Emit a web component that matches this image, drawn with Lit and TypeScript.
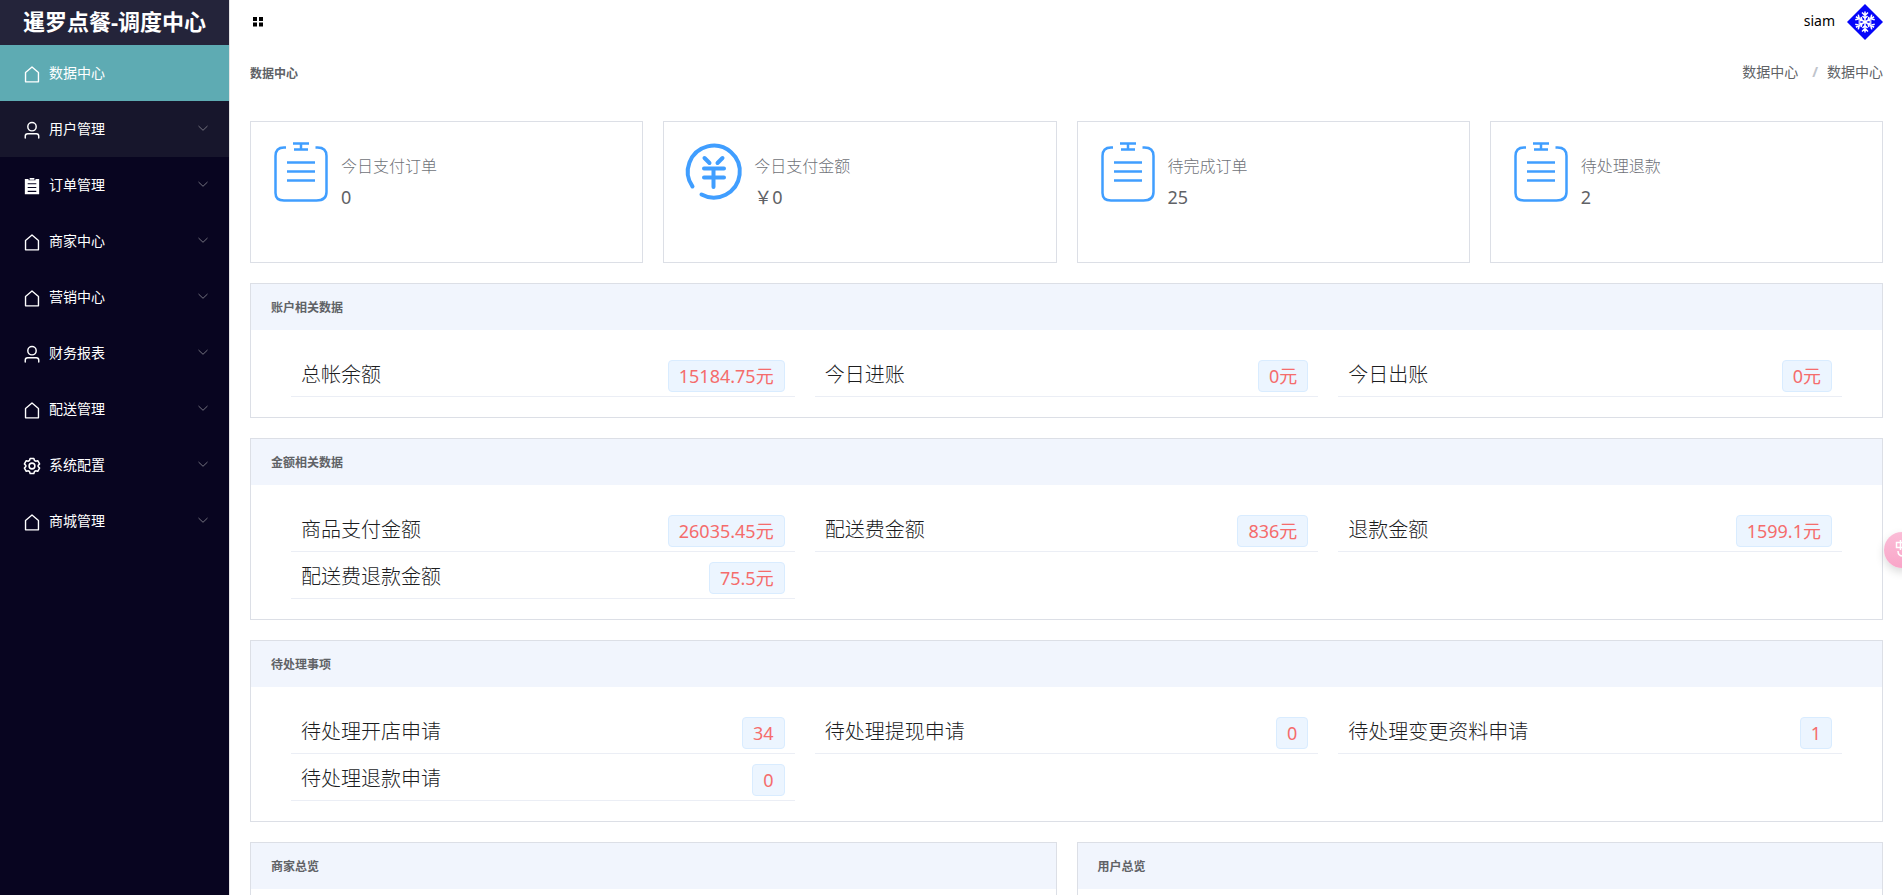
import { LitElement, html, svg, css } from "lit";
import { customElement, property } from "lit/decorators.js";

const FONT = css`"Noto Sans", "Noto Sans CJK SC", sans-serif`;

const icons: Record<string, unknown> = {
  house: svg`<path fill="none" stroke="currentColor" stroke-width="72" stroke-linejoin="round" d="M176 430V920h672V430L512 148z" />`,
  user: svg`<path fill="currentColor" d="M512 520a180 180 0 1 0 0-360 180 180 0 0 0 0 360m0 76a256 256 0 1 1 0-512 256 256 0 0 1 0 512m314 330v-92a90 90 0 0 0-90-90H288a90 90 0 0 0-90 90v92a37 37 0 1 1-74 0v-96a160 160 0 0 1 160-160h456a160 160 0 0 1 160 160v96a37 37 0 1 1-74 0" />`,
  order: svg`<path fill="currentColor" fill-rule="evenodd" d="M140 150h190v64h364v-64h190v786H140zm148 214v56h448v-56zm0 200v56h448v-56zm0 200v56h448v-56zM390 90h244v96H390z" />`,
  gear: svg`<path fill="none" stroke="currentColor" stroke-width="80" stroke-linejoin="round" d="M416 120h192l34 106 60 36 108-26 96 166-74 80v60l74 80-96 166-108-26-60 36-34 106H416l-34-106-60-36-108 26-96-166 74-80v-60l-74-80 96-166 108 26 60-36z" /><circle cx="512" cy="512" r="150" fill="none" stroke="currentColor" stroke-width="80" />`,
};

@customElement("side-item")
class SideItem extends LitElement {
  @property() label = "";
  @property() icon = "house";
  @property() state = "";
  @property({ type: Boolean }) leaf = false;

  static styles = css`
    :host { display: block; }
    .item {
      display: flex; align-items: center; width: 100%; height: 56px;
      padding: 0 20px 0 24px; border: 0; box-sizing: border-box;
      background: none; color: #fff; text-align: left; text-decoration: none;
      font: 14px/20px ${FONT}; cursor: pointer;
    }
    .active { background: #5eabb3; }
    .hover { background: #17162c; }
    .icon { width: 16px; height: 16px; margin: 2px 9px 0 0; }
    .label { flex: 1; }
    .arrow { width: 12px; height: 12px; color: #73727e; margin-top: -2px; }
  `;

  render() {
    const body = html`
      <svg class="icon" viewBox="96 96 832 832" overflow="visible" aria-hidden="true">${icons[this.icon]}</svg>
      <span class="label">${this.label}</span>`;
    return this.leaf
      ? html`<a class="item ${this.state}" href="#">${body}</a>`
      : html`<button class="item ${this.state}" type="button">${body}
          <svg class="arrow" viewBox="0 0 12 12" aria-hidden="true"><path d="M1.5 4L6 8.3 10.500 4" fill="none" stroke="currentColor" /></svg>
        </button>`;
  }
}

@customElement("stat-card")
class StatCard extends LitElement {
  @property() label = "";
  @property() value = "";
  @property() icon = "list";

  static styles = css`
    :host {
      display: flex; height: 142px; box-sizing: border-box; padding: 19px 20px;
      border: 1px solid #dcdfe6; background: #fff; font-family: ${FONT};
    }
    .icon { width: 60px; height: 60px; color: #409eff; flex: none; }
    .text { margin: 9px 0 0 10px; }
    .label { font-size: 16px; line-height: 32px; font-weight: 300; color: #6f7278; }
    .value { font-size: 18px; line-height: 30px; color: #606266; }
  `;

  render() {
    const art = this.icon === "list"
      ? svg`<path d="M15 6.500h-2Q4.500 6.500 4.500 15v37Q4.500 59.500 13 59.500h32.500Q55.500 59.500 55.500 51V15Q55.500 6.500 46.500 6.500h-2" stroke-width="2.500" /><path d="M22 2.500h16M30 2v6M23 8.500h14M16 21.500h28M16 30.500h28M16 39.500h28" stroke-width="2.500" />`
      : svg`<path d="M8.500 45.500a26 26 0 1 1 9 8" stroke-width="4" stroke-linecap="round" /><path d="M20.500 17l5 5M38.500 17l-5 5M20 27.500h20M20 36.500h20M29.500 28v18" stroke-width="4" stroke-linecap="round" />`;
    return html`
      <svg class="icon" viewBox="0 0 60 60" fill="none" stroke="currentColor" overflow="visible" aria-hidden="true">${art}</svg>
      <div class="text"><div class="label">${this.label}</div><div class="value">${this.value}</div></div>`;
  }
}

@customElement("data-panel")
class DataPanel extends LitElement {
  @property() heading = "";
  @property({ attribute: false }) rows: [string, string][] = [];

  static styles = css`
    :host { display: block; border: 1px solid #dcdfe6; background: #fff; font-family: ${FONT}; }
    .heading { margin: 0; height: 46px; box-sizing: border-box; padding: 2px 20px 0; font-size: 12px; line-height: 44px; font-weight: 700; color: #606266; background: #f1f5fd; }
    .grid { display: grid; grid-template-columns: repeat(3, 1fr); column-gap: 20px; margin: 0; padding: 20px 40px; min-height: 47px; }
    .row { display: flex; justify-content: space-between; align-items: flex-end; height: 47px; box-sizing: border-box; padding: 0 10px 4px; border-bottom: 1px solid #ebeef5; }
    .name { font-size: 20px; line-height: 34px; font-weight: 300; color: #1c1d1f; }
    .tag { margin: 0; padding: 0 10px; border: 1px solid #d9ecff; border-radius: 4px; background: #ecf5ff; color: #f56c6c; font-size: 18px; line-height: 30px; }
  `;

  render() {
    return html`
      <h2 class="heading">${this.heading}</h2>
      <dl class="grid">${this.rows.map(([name, value]) => html`
        <div class="row"><dt class="name">${name}</dt><dd class="tag">${value}</dd></div>`)}</dl>`;
  }
}

@customElement("app-root")
class AppRoot extends LitElement {
  static styles = css`
    :host { display: flex; height: 100vh; overflow: hidden; background: #fff; font: 14px/20px ${FONT}; color: #303133; }
    .side { flex: none; width: 229px; background: #080520; border-right: 1px solid #e6e6e6; }
    .brand { height: 45px; margin: 0; background: #24243a; color: #fff; text-align: center; font-size: 22px; line-height: 42px; font-weight: 700; }
    .main { flex: 1; min-width: 0; padding: 0 19px 0 20px; overflow: hidden; }
    .top { display: flex; align-items: center; justify-content: space-between; height: 44px; }
    .toggle { display: flex; padding: 3px; border: 0; background: none; color: #000; }
    .user { display: flex; align-items: center; gap: 12px; color: #000; }
    .name { padding-bottom: 2px; }
    .avatar { width: 36px; height: 36px; }
    .crumbs { display: flex; align-items: center; justify-content: space-between; height: 57px; margin-bottom: 20px; }
    .title { margin: 0; padding-top: 2px; font-size: 12px; font-weight: 700; color: #606266; }
    .path { display: flex; padding-bottom: 2px; color: #606266; }
    .path a { color: inherit; text-decoration: none; }
    .slash { margin: 0 9px 0 14px; font-weight: 700; color: #c0c4cc; }
    .stack { display: grid; gap: 20px; }
    .stats { display: grid; grid-template-columns: repeat(4, 1fr); gap: 20px; }
    .pair { display: grid; grid-template-columns: 1fr 1fr; gap: 20px; }
    .float { position: fixed; right: -18px; top: 532px; width: 36px; height: 36px; padding: 0; border: 0; border-radius: 50%; background: linear-gradient(#fbbdd7, #f9a5c8); box-shadow: 0 4px 10px rgba(0, 0, 0, 0.15); }
  `;

  private menu = [
    ["数据中心", "house", "active"],
    ["用户管理", "user", "hover"],
    ["订单管理", "order", ""],
    ["商家中心", "house", ""],
    ["营销中心", "house", ""],
    ["财务报表", "user", ""],
    ["配送管理", "house", ""],
    ["系统配置", "gear", ""],
    ["商城管理", "house", ""],
  ];

  private stats = [
    ["今日支付订单", "0", "list"],
    ["今日支付金额", "￥0", "yen"],
    ["待完成订单", "25", "list"],
    ["待处理退款", "2", "list"],
  ];

  private panels: { heading: string; rows: [string, string][] }[] = [
    { heading: "账户相关数据", rows: [["总帐余额", "15184.75元"], ["今日进账", "0元"], ["今日出账", "0元"]] },
    { heading: "金额相关数据", rows: [["商品支付金额", "26035.45元"], ["配送费金额", "836元"], ["退款金额", "1599.1元"], ["配送费退款金额", "75.5元"]] },
    { heading: "待处理事项", rows: [["待处理开店申请", "34"], ["待处理提现申请", "0"], ["待处理变更资料申请", "1"], ["待处理退款申请", "0"]] },
  ];

  render() {
    return html`
      <nav class="side">
        <h1 class="brand">暹罗点餐-调度中心</h1>
        ${this.menu.map(([label, icon, state], i) => html`<side-item .label=${label} .icon=${icon} .state=${state} .leaf=${i === 0}></side-item>`)}
      </nav>
      <main class="main">
        <header class="top">
          <button class="toggle" type="button" aria-label="menu">
            <svg width="10" height="10" viewBox="0 0 10 10"><path d="M0 0h4v4H0zM6 0h4v4H6zM0 5.500h4v4H0zM6 5.500h4v4H6z" /></svg>
          </button>
          <div class="user">
            <span class="name">siam</span>
            <svg class="avatar" viewBox="0 0 36 36" aria-hidden="true">
              <path d="M18 0L36 18 18 36 0 18z" fill="#0505fa" />
              <g fill="none" stroke="#fff" stroke-width="1.500">
                ${[0, 60, 120, 180, 240, 300].map((a) => svg`<path transform="rotate(${a} 18 18)" d="M18 18V7.500M15 8.500L18 11.500 21 8.500M15.500 12L18 14.500 20.500 12" />`)}
              </g>
            </svg>
          </div>
        </header>
        <div class="crumbs">
          <h2 class="title">数据中心</h2>
          <nav class="path"><a href="#">数据中心</a><span class="slash">/</span><span>数据中心</span></nav>
        </div>
        <div class="stack">
          <section class="stats">
            ${this.stats.map(([label, value, icon]) => html`<stat-card .label=${label} .value=${value} .icon=${icon}></stat-card>`)}
          </section>
          ${this.panels.map((p) => html`<data-panel .heading=${p.heading} .rows=${p.rows}></data-panel>`)}
          <section class="pair">
            <data-panel heading="商家总览"></data-panel>
            <data-panel heading="用户总览"></data-panel>
          </section>
        </div>
      </main>
      <button class="float" type="button" aria-label="translate">
        <svg width="36" height="36" viewBox="0 0 36 36" fill="none" stroke="#fff" stroke-width="1.500"><path d="M12.500 10.500h11v5h-11zM16.500 8v10M14 19c0 4 2 5 5 5s5-1 5-5" /></svg>
      </button>
    `;
  }
}
